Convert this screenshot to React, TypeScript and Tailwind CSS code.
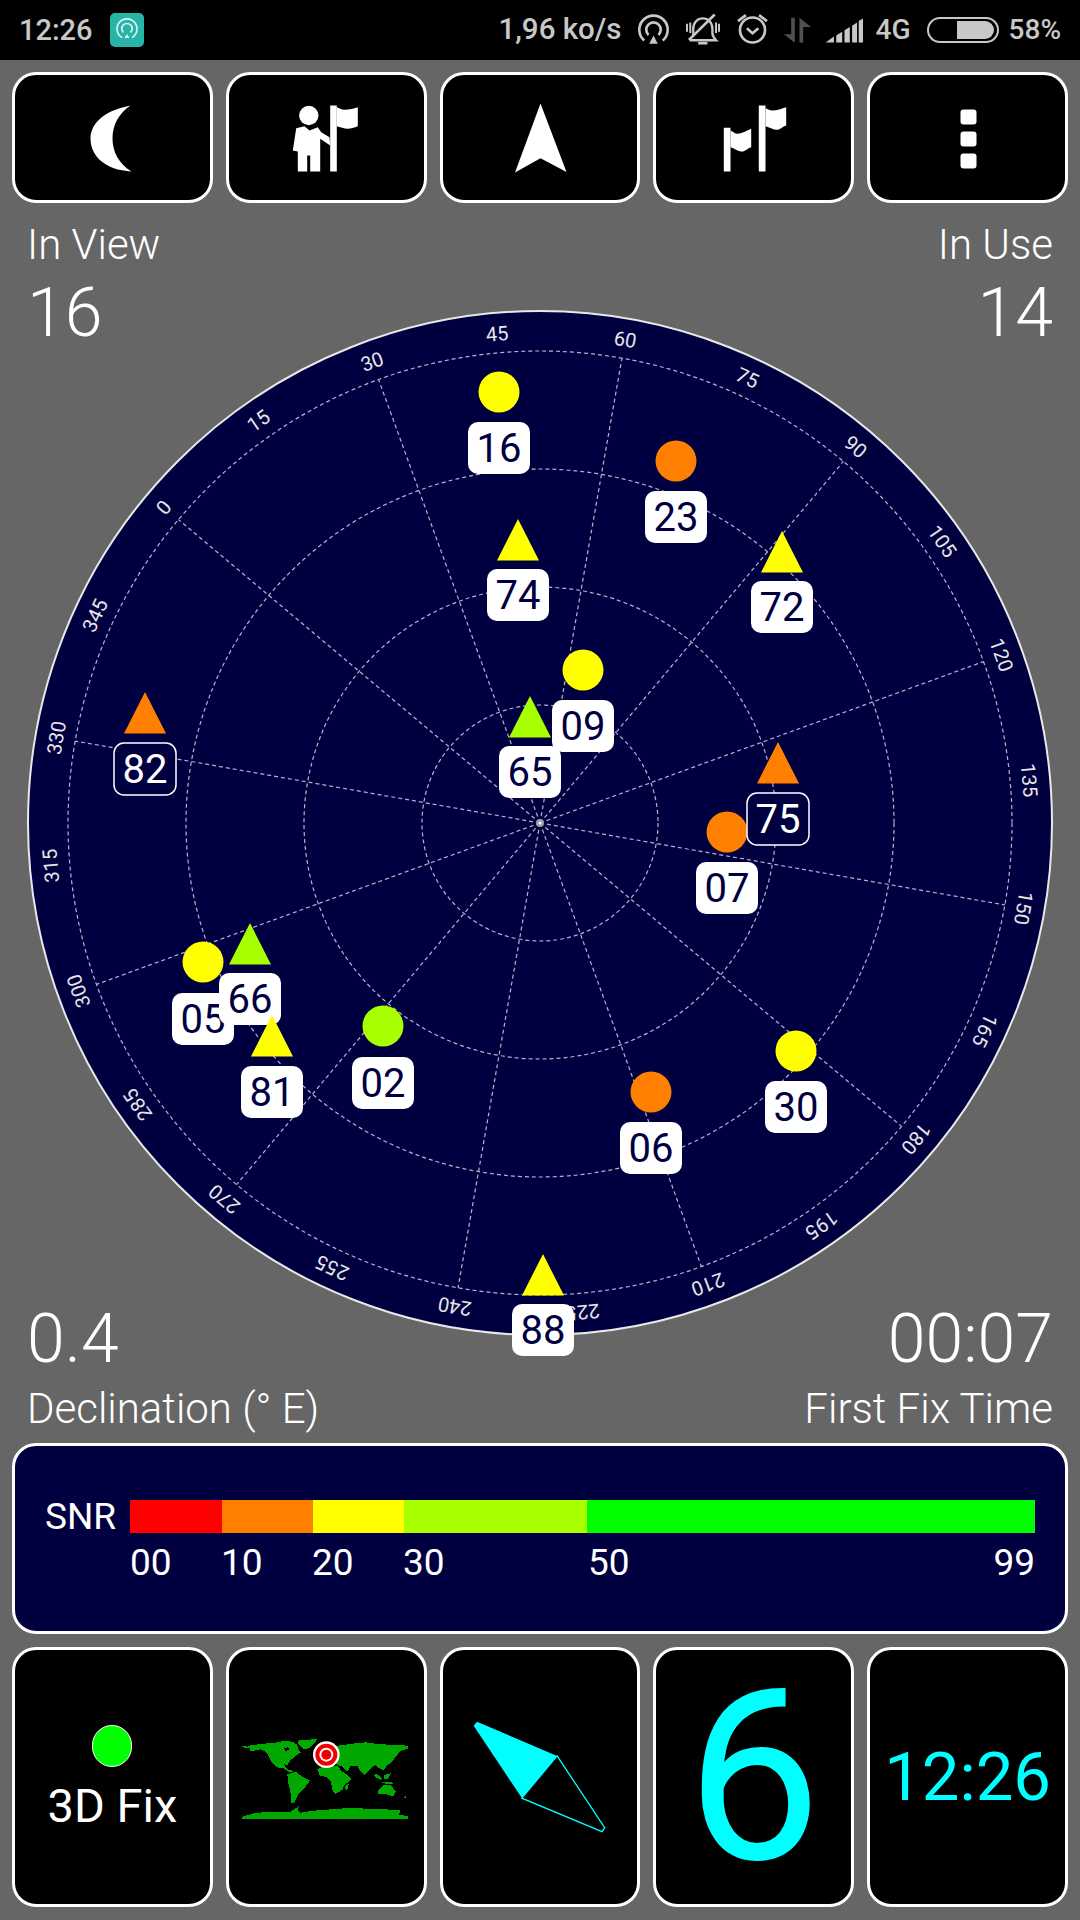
const NAVY = "#000040";
const YELLOW = "#ffff00";
const ORANGE = "#ff8000";
const LIME = "#a8ff00";

type Sat = {
  id: string;
  x: number;
  y: number;
  color: string;
  shape: "circle" | "triangle";
  labelY: number;
  outlined?: boolean;
};

// y is the circle centre, or the apex of the triangle
const sats: Sat[] = [
  { id: "16", x: 499, y: 392, color: YELLOW, shape: "circle", labelY: 448 },
  { id: "23", x: 676, y: 461, color: ORANGE, shape: "circle", labelY: 517 },
  { id: "74", x: 518, y: 519, color: YELLOW, shape: "triangle", labelY: 595 },
  { id: "72", x: 782, y: 531, color: YELLOW, shape: "triangle", labelY: 607 },
  { id: "09", x: 583, y: 670, color: YELLOW, shape: "circle", labelY: 726 },
  { id: "65", x: 530, y: 696, color: LIME, shape: "triangle", labelY: 772 },
  { id: "82", x: 145, y: 692, color: ORANGE, shape: "triangle", labelY: 769, outlined: true },
  { id: "07", x: 727, y: 832, color: ORANGE, shape: "circle", labelY: 888 },
  { id: "75", x: 778, y: 742, color: ORANGE, shape: "triangle", labelY: 819, outlined: true },
  { id: "05", x: 203, y: 962, color: YELLOW, shape: "circle", labelY: 1019 },
  { id: "66", x: 250, y: 923, color: LIME, shape: "triangle", labelY: 999 },
  { id: "81", x: 272, y: 1015, color: YELLOW, shape: "triangle", labelY: 1092 },
  { id: "02", x: 383, y: 1026, color: LIME, shape: "circle", labelY: 1083 },
  { id: "06", x: 651, y: 1092, color: ORANGE, shape: "circle", labelY: 1148 },
  { id: "30", x: 796, y: 1051, color: YELLOW, shape: "circle", labelY: 1107 },
  { id: "88", x: 543, y: 1254, color: YELLOW, shape: "triangle", labelY: 1330 },
];

const CX = 540;
const CY = 823;
const OFFSET = -50;

const Radar = () => {
  const spokes = Array.from({ length: 12 }, (_, i) => i * 30);
  const ticks = Array.from({ length: 24 }, (_, i) => i * 15);
  return (
    <svg width="1080" height="1080" viewBox="0 283 1080 1080" className="block">
      <circle cx={CX} cy={CY} r="512" fill={NAVY} stroke="#e8e8e8" strokeWidth="2" />
      {[118, 236, 354, 472].map((r) => (
        <circle key={r} cx={CX} cy={CY} r={r} fill="none" stroke="#b4b4c8" strokeWidth="1.2" strokeDasharray="4 3" />
      ))}
      {spokes.map((a) => (
        <line
          key={a}
          x1={CX}
          y1={CY}
          x2={CX}
          y2={CY - 472}
          stroke="#b4b4c8"
          strokeWidth="1.2"
          strokeDasharray="4 3"
          transform={`rotate(${a + OFFSET} ${CX} ${CY})`}
        />
      ))}
      <circle cx={CX} cy={CY} r="4" fill="#9a9aaa" />
      <circle cx={CX} cy={CY} r="1.5" fill="#ffffff" />
      {ticks.map((a) => (
        <text
          key={a}
          x={CX}
          y={CY - 484}
          fontSize="20"
          fill="#e6e6e6"
          textAnchor="middle"
          transform={`rotate(${a + OFFSET} ${CX} ${CY})`}
        >
          {a}
        </text>
      ))}
      {sats.map((s) => (
        <g key={s.id}>
          {s.shape === "circle" ? (
            <circle cx={s.x} cy={s.y} r="20.5" fill={s.color} />
          ) : (
            <polygon points={`${s.x},${s.y} ${s.x + 21},${s.y + 41.5} ${s.x - 21},${s.y + 41.5}`} fill={s.color} />
          )}
          <rect
            x={s.x - 31}
            y={s.labelY - 26}
            width="62"
            height="52"
            rx="10"
            fill={s.outlined ? NAVY : "#ffffff"}
            stroke={s.outlined ? "#ffffff" : "none"}
            strokeWidth="1.5"
          />
          <text
            x={s.x}
            y={s.labelY + 14}
            fontSize="40"
            fill={s.outlined ? "#ffffff" : NAVY}
            textAnchor="middle"
          >
            {s.id}
          </text>
        </g>
      ))}
    </svg>
  );
};

const WorldMap = () => (
  <svg width="185" height="95" viewBox="0 0 555 285" shapeRendering="crispEdges">
    <g fill="#00a800">
      <polygon points="25,47 40,50 50,45 75,43 100,40 125,38 150,33 175,35 190,45 195,60 200,68 185,78 170,90 160,105 150,103 155,113 165,120 172,118 178,125 165,127 150,115 130,112 115,100 105,80 95,65 80,58 60,62 50,65 47,55 25,52" />
      <polygon points="190,32 250,27 240,42 225,55 210,58 195,45" />
      <polygon points="160,133 185,125 205,140 228,152 215,170 195,190 180,220 172,218 170,190 163,160" />
      <polygon points="250,118 270,108 310,108 325,125 340,135 352,148 332,165 325,180 305,192 297,185 290,155 275,140 258,138" />
      <polygon points="300,48 330,45 365,40 395,37 430,42 480,45 522,47 522,55 500,63 485,80 475,95 460,105 450,120 435,115 425,105 410,115 392,135 380,125 370,108 350,107 340,125 325,110 310,105 300,90 315,75" />
      <polygon points="335,165 345,160 340,180 333,178" />
      <polygon points="475,75 482,72 478,90 470,92" />
      <polygon points="425,130 445,145 440,150 420,138" />
      <polygon points="445,155 480,158 475,162 445,160" />
      <polygon points="450,135 470,130 462,148 450,148" />
      <polygon points="432,180 450,165 470,165 485,185 478,200 455,192 432,192" />
      <polygon points="505,205 518,197 514,205" />
      <polygon points="25,260 60,250 100,245 170,245 195,228 190,240 200,248 240,242 330,235 375,235 500,240 495,255 522,258 522,267 25,267" />
    </g>
    <polygon points="150,54 162,52 166,60 155,63" fill="#000000" />
    <g shapeRendering="geometricPrecision">
      <circle cx="277" cy="74" r="40" fill="#ffffff" />
      <circle cx="277" cy="74" r="33" fill="#f00000" />
      <circle cx="277" cy="74" r="21" fill="#ffffff" />
      <circle cx="277" cy="74" r="15" fill="#f00000" />
    </g>
  </svg>
);

const Compass = () => (
  <svg width="133" height="112" viewBox="760 245 400 335">
    <polygon points="762,258 772,246 1013,349 907,476" fill="#00ffff" />
    <polygon points="1013,349 1156,565 1148,577 907,476" fill="none" stroke="#00ffff" strokeWidth="4" />
  </svg>
);

const Tile = ({ children, className = "" }: { children: React.ReactNode; className?: string }) => (
  <div className={`flex flex-1 flex-col items-center justify-center rounded-3xl border-[3px] border-white bg-black ${className}`}>
    {children}
  </div>
);

const Icon = ({ children }: { children: React.ReactNode }) => (
  <svg width="80" height="80" viewBox="0 0 80 80" fill="#ffffff">
    {children}
  </svg>
);

const StatusBar = () => (
  <div className="flex h-[60px] items-center bg-black px-[19px] text-[28px] leading-none font-medium text-[#c8c8c8]">
    <span className="text-[29px]">12:26</span>
    <div className="ml-[17px] flex h-[34px] w-[34px] items-center justify-center rounded-[5px] bg-[#27b5a7]">
      <svg width="34" height="34" viewBox="0 0 34 34" fill="none" stroke="#e4f7f5" strokeWidth="1.6">
        <path d="M12 24.5A10 10 0 1 1 22 24.5" />
        <path d="M13.5 19.5A5.2 5.2 0 1 1 20.5 19.5" />
        <path d="M17 21l2.5 4h-5z" fill="#e4f7f5" stroke="none" />
      </svg>
    </div>
    <span className="ml-auto text-[29.5px]">1,96 ko/s</span>
    <svg className="ml-[15px]" width="33" height="50" viewBox="25 0 100 150" fill="none" stroke="#c8c8c8" strokeWidth="8">
      <path d="M47 107A43 43 0 1 1 103 107" />
      <path d="M60 90A22 22 0 1 1 90 90" />
      <path d="M75 92L88 117H62Z" fill="#c8c8c8" stroke="none" />
    </svg>
    <svg className="ml-[14px]" width="38" height="50" viewBox="165 0 115 150" fill="none" stroke="#c8c8c8" strokeWidth="7">
      <path d="M193 95V72C193 52 206 40 222 40C238 40 251 52 251 72V85C251 95 256 100 262 106H182" />
      <path d="M208 115H236" strokeWidth="8" />
      <path d="M258 28L180 105" strokeWidth="8" />
      <path d="M174 56V80M184 52V84M262 52V84M271 56V80" strokeWidth="6" />
    </svg>
    <svg className="ml-[14px]" width="33" height="50" viewBox="322 0 100 150" fill="none" stroke="#c8c8c8" strokeWidth="8">
      <circle cx="372" cy="75" r="38" />
      <path d="M355 70L372 85L390 70" />
      <path d="M328 48L352 30M392 30L416 48" />
    </svg>
    <svg className="ml-[13px]" width="31" height="50" viewBox="460 0 92 150" fill="#505050">
      <path d="M487 38H498V113L465 88H487Z" />
      <path d="M512 38L547 66H523V113H512Z" />
    </svg>
    <svg className="ml-[12px]" width="39" height="50" viewBox="588 0 118 150" fill="#c8c8c8">
      <path d="M590 113L615 95V113ZM622 92L640 80V113H622ZM647 76L663 66V113H647ZM670 62L685 52V113H670ZM690 48L703 40V113H690Z" />
    </svg>
    <span className="ml-[12px]">4G</span>
    <div className="ml-[16px] flex h-[26px] w-[72px] items-center justify-end rounded-[13px] border-2 border-[#c8c8c8] pr-[3px]">
      <div className="h-[18px] w-[37px] rounded-r-[9px] bg-[#c8c8c8]" />
    </div>
    <span className="ml-[10px]">58%</span>
  </div>
);

export default function App() {
  return (
    <div className="flex h-[1920px] w-[1080px] flex-col overflow-hidden bg-[#666666] font-[Roboto,sans-serif] text-white">
      <StatusBar />

      <div className="mt-3 flex h-[131px] gap-[13px] px-3">
        <Tile>
          <Icon>
            <path d="M58.5 7.5C30 13 18.5 27 18.5 40.5C18.5 58 33 72 59.5 73.5C47 66 40.5 54 40.5 40.5C40.5 27 47 15 58.5 7.5Z" />
          </Icon>
        </Tile>
        <Tile>
          <Icon>
            <circle cx="22.8" cy="17.5" r="9.7" />
            <path d="M44.2 7.5H50.8V73.5H44.2Z" />
            <path d="M50.8 9.2C53 10 56 12 58.5 11.8C63 11.5 68 10.5 71.8 9.2V28.2C68 29.5 65 30.8 61.8 30.8C58 30.8 54 29 50.8 28.2Z" />
            <path d="M10.2 30.2L18.5 28.2L23.5 32.5L31.8 29.2L35.2 34.2L43.5 39.2L44.2 47.5L34.2 40.8V73.5H24.2V57.5H21.2V73.5H11.8V53.5L6.8 52.5Z" />
          </Icon>
        </Tile>
        <Tile>
          <Icon>
            <path d="M40.5 5.5L66.5 74L40.5 60.2L15 74.5Z" />
          </Icon>
        </Tile>
        <Tile>
          <Icon>
            <path d="M9.8 29.8H16.5V73.5H9.8ZM44.8 7.5H51.5V73.5H44.8Z" />
            <path d="M16.5 32.5C19 33.5 21 35.8 23.2 35.8C28 35.8 33 32.5 37.2 30.8V49.2C33 50.5 31 53.5 28.2 53.5C24 53.5 20 50 16.5 49.2Z" />
            <path d="M51.5 10.2C54 11 56 12.5 58.2 12.5C63 12.5 68 10.5 72.2 9.2V27.5C68 29 66 31.8 63.2 31.8C59 31.8 55 29 51.5 28.2Z" />
          </Icon>
        </Tile>
        <Tile>
          <Icon>
            <rect x="32.5" y="11.5" width="16" height="15" rx="3" />
            <rect x="32.5" y="33.5" width="16" height="15" rx="3" />
            <rect x="32.5" y="55.5" width="16" height="15" rx="3" />
          </Icon>
        </Tile>
      </div>

      <div className="mt-[19px] flex justify-between px-[27px] font-light">
        <div>
          <div className="text-[42px] leading-[45px]">In View</div>
          <div className="mt-[6px] text-[68px] leading-[80px]">16</div>
        </div>
        <div className="text-right">
          <div className="text-[42px] leading-[45px]">In Use</div>
          <div className="mt-[6px] text-[68px] leading-[80px]">14</div>
        </div>
      </div>

      <div className="mt-[-70px]">
        <Radar />
      </div>

      <div className="mt-[-64px] flex justify-between px-[27px] font-light">
        <div>
          <div className="text-[68px] leading-[80px]">0.4</div>
          <div className="mt-[7px] text-[42px] leading-[45px]">Declination (° E)</div>
        </div>
        <div className="text-right">
          <div className="text-[68px] leading-[80px]">00:07</div>
          <div className="mt-[7px] text-[42px] leading-[45px]">First Fix Time</div>
        </div>
      </div>

      <div className="mx-3 mt-[12px] flex h-[191px] flex-col justify-center rounded-3xl border-[3px] border-white bg-[#000040] pt-[4px]">
        <div className="flex items-center pl-[30px]">
          <span className="w-[85px] text-[37px] leading-none">SNR</span>
          <div className="flex h-[33px] w-[905px]">
            <div className="w-[92px] bg-[#ff0000]" />
            <div className="w-[91px] bg-[#ff8000]" />
            <div className="w-[91px] bg-[#ffff00]" />
            <div className="w-[183px] bg-[#a8ff00]" />
            <div className="flex-1 bg-[#00ff00]" />
          </div>
        </div>
        <div className="mt-[7px] flex pr-[30px] pl-[115px] text-[37px] leading-[42px]">
          <span className="w-[91px]">00</span>
          <span className="w-[91px]">10</span>
          <span className="w-[91px]">20</span>
          <span className="w-[185px]">30</span>
          <span>50</span>
          <span className="ml-auto">99</span>
        </div>
      </div>

      <div className="mt-[13px] flex h-[260px] gap-[13px] px-3">
        <Tile className="pt-[4px]">
          <div className="h-[42px] w-[40px] rounded-full border border-white bg-[#00ff00]" />
          <div className="mt-[12px] text-[47px] leading-[54px]">3D Fix</div>
        </Tile>
        <Tile>
          <WorldMap />
        </Tile>
        <Tile>
          <Compass />
        </Tile>
        <Tile>
          <div className="text-[240px] leading-none text-[#00ffff]">6</div>
        </Tile>
        <Tile>
          <div className="text-[67px] leading-none text-[#00ffff]">12:26</div>
        </Tile>
      </div>
    </div>
  );
}
